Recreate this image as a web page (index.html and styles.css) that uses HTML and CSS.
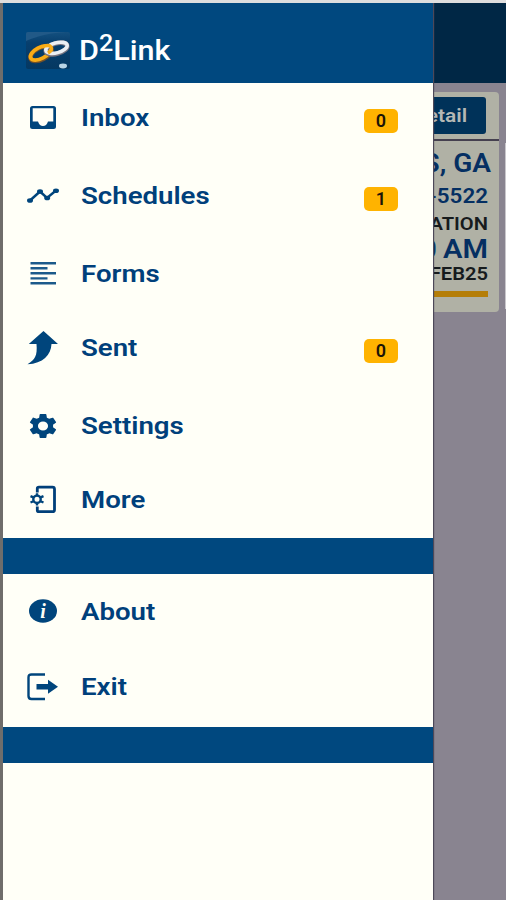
FILE: index.html
```html
<!DOCTYPE html>
<html lang="en">
<head>
    <meta charset="UTF-8">
    <meta name="viewport" content="width=device-width, initial-scale=1.0">
    <title>D2Link</title>
    <link rel="stylesheet" href="styles.css">
</head>
<body>
    <div class="app">
        <main class="screen">
            <div class="topbar"></div>
            <div class="row">
                <div class="card">
                    <div class="card-head">
                        <button class="detail"><span>Detail</span></button>
                    </div>
                    <div class="card-body">
                        <p class="city">S, GA</p>
                        <p class="phone">-5522</p>
                        <p class="small">ATION</p>
                        <p class="time">00 AM</p>
                        <p class="small date">FEB25</p>
                        <div class="bar"></div>
                    </div>
                </div>
                <div class="scrollbar"></div>
            </div>
        </main>

        <aside class="drawer">
            <header class="header">
                <svg class="logo" width="46" height="40" viewBox="0 0 46 40">
                    <defs>
                        <linearGradient id="tile" x1="0" y1="0" x2="0" y2="1">
                            <stop offset="0" stop-color="#14507f"/>
                            <stop offset="0.3" stop-color="#073f6e"/>
                            <stop offset="1" stop-color="#053861"/>
                        </linearGradient>
                    </defs>
                    <rect x="1" y="1" width="44" height="37" rx="2" fill="url(#tile)"/>
                    <path d="M1 10V3q0-2 2-2h38q-16 1-26 4T1 10z" fill="#215987"/>
                    <ellipse cx="16" cy="22.5" rx="11.500" ry="5.800" transform="rotate(-28 16 22.500)" fill="none" stroke="#70502c" stroke-width="4.800"/>
                    <ellipse cx="15.500" cy="22" rx="11" ry="5.500" transform="rotate(-28 15.500 22)" fill="none" stroke="#f9ac16" stroke-width="3.800"/>
                    <ellipse cx="31.500" cy="17.500" rx="11" ry="5.200" transform="rotate(-15 31.500 17.500)" fill="none" stroke="#77737f" stroke-width="4.800"/>
                    <ellipse cx="31.500" cy="16.800" rx="11" ry="5" transform="rotate(-15 31.500 16.800)" fill="none" stroke="#eceff3" stroke-width="3.600"/>
                    <path d="M17 16q7-3 9 0t-3 6" fill="none" stroke="#f9ac16" stroke-width="3.400"/>
                    <ellipse cx="38" cy="35" rx="4" ry="2.400" fill="#b9d3e4"/>
                </svg>
                <h1>D<sup>2</sup>Link</h1>
            </header>

            <ul class="menu">
                <li class="gap">
                    <svg width="32" height="32" viewBox="0 0 32 32">
                        <path fill-rule="evenodd" d="M5.500 4h21q2.500 0 2.500 2.500v18q0 2.500-2.500 2.500h-21Q3 27 3 24.500v-18Q3 4 5.500 4zM5.700 6.200v13.300H11q1.500 4.500 5 4.500t5-4.500h5.300V6.200z"/>
                    </svg>
                    <span class="label">Inbox</span>
                    <span class="badge">0</span>
                </li>
                <li class="gap">
                    <svg width="32" height="32" viewBox="0 0 32 32">
                        <path d="M3 20.500L13 11.500l7 6.500 9-7.500" fill="none" stroke="#00457c" stroke-width="2.400"/>
                        <ellipse cx="3" cy="20.500" rx="3" ry="2.300"/>
                        <ellipse cx="13" cy="11.500" rx="3" ry="2.300"/>
                        <ellipse cx="20.200" cy="18" rx="3" ry="2.300"/>
                        <ellipse cx="29" cy="10.700" rx="3" ry="2.300"/>
                    </svg>
                    <span class="label">Schedules</span>
                    <span class="badge">1</span>
                </li>
                <li>
                    <svg width="32" height="32" viewBox="0 0 32 32">
                        <path fill="#1c5a8b" d="M3.500 4H29v2.400H3.500zM3.500 9h17v2.400h-17zM3.500 14H29v2.400H3.500zM3.500 19.200h17v2.400h-17zM3.500 24H29v2.400H3.500z"/>
                    </svg>
                    <span class="label">Forms</span>
                </li>
                <li class="gap">
                    <svg width="32" height="36" viewBox="0 0 32 36">
                        <path d="M16.500 1L31 14h-6.500C24 25 16 33.500.500 34.300 8 29.500 10.500 26 9.500 14H1.800z"/>
                    </svg>
                    <span class="label">Sent</span>
                    <span class="badge">0</span>
                </li>
                <li>
                    <svg width="32" height="24" viewBox="0.600 2.400 22.800 19.200" preserveAspectRatio="none">
                        <path d="M19.140 12.940c.040-.300.060-.610.060-.940 0-.320-.020-.640-.070-.940l2.030-1.580c.180-.140.230-.410.120-.610l-1.920-3.320c-.120-.220-.370-.290-.590-.220l-2.390.960c-.500-.380-1.030-.700-1.620-.940L14.400 2.810c-.040-.240-.240-.410-.480-.410h-3.840c-.240 0-.430.170-.470.410L9.250 5.350c-.590.240-1.130.570-1.620.940L5.240 5.330c-.220-.080-.470 0-.590.220L2.740 8.870c-.120.210-.080.470.120.610l2.030 1.580c-.050.300-.090.630-.090.940s.020.640.070.940l-2.030 1.580c-.180.140-.230.410-.120.610l1.920 3.320c.120.220.370.290.590.220l2.390-.960c.500.380 1.030.700 1.620.940l.360 2.540c.050.240.240.410.480.410h3.840c.240 0 .440-.170.470-.410l.360-2.540c.590-.240 1.130-.560 1.620-.940l2.390.960c.220.080.470 0 .590-.220l1.920-3.320c.120-.220.070-.470-.120-.610zM12 15.600A3.600 3.600 0 1 1 12 8.400a3.600 3.600 0 0 1 0 7.200z"/>
                    </svg>
                    <span class="label">Settings</span>
                </li>
                <li>
                    <svg width="32" height="32" viewBox="0 0 32 32">
                        <path d="M10.300 8.500V4.500Q10.300 3.200 12 3.200h13.500q2 0 2 2v20.500q0 2-2 2H12q-1.700 0-1.700-1.500V22.500" fill="none" stroke="#003f7a" stroke-width="2.800"/>
                        <circle cx="10" cy="15.300" r="3.700" fill="none" stroke="#00457c" stroke-width="2.400"/>
                        <path d="M10 9.300v3M10 18.500v3M3.500 12.200l3.500 1.500M13 17l3.500 1.500M3.500 18.500L7 17M13 13.700l3.500-1.500" stroke="#00457c" stroke-width="2.400"/>
                    </svg>
                    <span class="label">More</span>
                </li>
            </ul>

            <ul class="menu lower">
                <li>
                    <svg width="32" height="32" viewBox="0 0 32 32">
                        <ellipse cx="16" cy="15" rx="14" ry="11.800"/>
                        <text x="16" y="21.500" class="info">i</text>
                    </svg>
                    <span class="label">About</span>
                </li>
                <li>
                    <svg width="32" height="32" viewBox="0 0 32 32">
                        <path d="M18 3.500H4.500Q1.500 3.500 1.500 6.500v18.500q0 3 3 3H18" fill="none" stroke="#00457c" stroke-width="2.400"/>
                        <path d="M9.500 13H21V8.700l10 7-10 7v-4.200H9.500z"/>
                    </svg>
                    <span class="label">Exit</span>
                </li>
            </ul>
        </aside>
    </div>
</body>
</html>
```
FILE: styles.css
```css
body {
    margin: 0;
    font-family: Roboto, sans-serif;
    background: #6f6d6b;
}
.app {
    position: relative;
    box-sizing: border-box;
    height: 900px;
    padding-left: 3px;
    border-top: 3px solid #dedede;
    overflow: hidden;
}

/* dimmed screen behind the drawer */
.screen {
    height: 897px;
    background: #898490;
}
.topbar {
    height: 80px;
    background: #002745;
}
.row {
    display: flex;
    padding-top: 9px;
}
.card {
    flex: 1;
    height: 220px;
    margin: 0 6px 0 9px;
    border-radius: 4px;
    background: #b0b1a5;
}
.scrollbar {
    width: 1px;
    height: 166px;
    margin-top: 51px;
    background: #c9c7cc;
}
.card-head {
    display: flex;
    justify-content: flex-end;
    box-sizing: border-box;
    height: 49px;
    padding: 5px 13px 0 0;
    border-bottom: 2px solid #45404f;
}
.detail {
    width: 90px;
    height: 37px;
    padding: 0 19px 0 0;
    border: none;
    border-radius: 3px;
    background: #003259;
    color: #b4b8b5;
    font: 600 19px Roboto, sans-serif;
    text-align: right;
}
.detail span {
    display: inline-block;
    transform: scaleX(1.1);
    transform-origin: right;
}
.card-body {
    padding: 8px 11px 0 0;
    text-align: right;
}
.card-body p {
    margin: 0;
    color: #052f62;
    font-weight: 600;
    white-space: nowrap;
    transform: scaleX(1.12);
    transform-origin: right;
}
.card-body .city {
    margin-right: -3px;
    font-size: 25px;
    line-height: 30px;
}
.card-body .phone {
    font-size: 20px;
    line-height: 35px;
}
.card-body .small {
    color: #171b1d;
    font-size: 18px;
    line-height: 20px;
}
.card-body .time {
    font-size: 26px;
    line-height: 30px;
    word-spacing: -1px;
}
.bar {
    height: 6px;
    margin-top: 7px;
    background: #b57e08;
}

/* drawer */
.drawer {
    position: absolute;
    top: 0;
    left: 3px;
    width: 429.500px;
    height: 897px;
    background: #fffff7;
    box-shadow: 1px 0 1px #4d4858;
}
.header {
    display: flex;
    align-items: center;
    box-sizing: border-box;
    height: 80px;
    padding: 15px 0 0 22px;
    background: #00487f;
}
.logo {
    margin-right: 8px;
}
h1 {
    margin: 0;
    color: #fff;
    font-size: 28px;
    font-weight: 500;
    line-height: 32px;
    transform: scaleX(1.09);
    transform-origin: left;
}
h1 sup {
    font-size: 23px;
    line-height: 0;
    vertical-align: 9px;
}
.menu {
    box-sizing: border-box;
    height: 491px;
    margin: 0;
    padding: 0;
    list-style: none;
    border-bottom: 36px solid #00487f;
}
.menu.lower {
    height: 189px;
    padding-top: 3px;
}
.menu li {
    display: flex;
    align-items: center;
    height: 70px;
    margin-bottom: 4px;
    padding: 0 34.500px 0 24px;
}
.menu .gap {
    margin-bottom: 8px;
}
.menu.lower li {
    margin-bottom: 5px;
}
.menu svg {
    flex: none;
    width: 32px;
    fill: #00457c;
}
.label {
    margin-left: 22px;
    color: #00407b;
    font-size: 24px;
    font-weight: 600;
    line-height: 30px;
    transform: scaleX(1.15);
    transform-origin: left;
}
.badge {
    width: 34px;
    height: 24px;
    margin: 6px 0 0 auto;
    border-radius: 5px;
    background: #ffb300;
    color: #1a1508;
    font-size: 18px;
    font-weight: 600;
    line-height: 24px;
    text-align: center;
}
.info {
    fill: #fffff7;
    font: italic bold 20px "Liberation Serif", serif;
    text-anchor: middle;
}
```
